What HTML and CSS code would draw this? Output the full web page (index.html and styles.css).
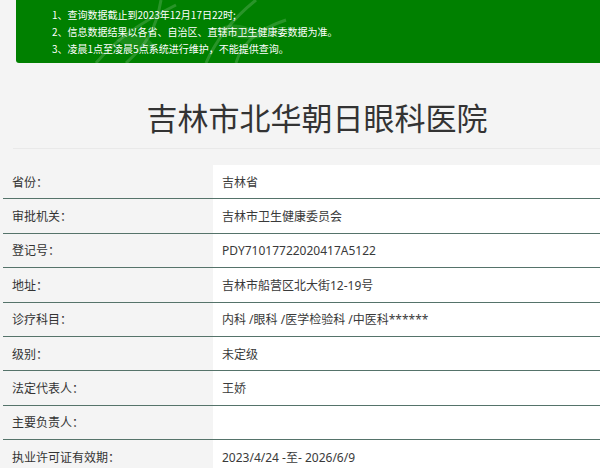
FILE: index.html
```html
<!DOCTYPE html>
<html lang="zh-CN">
<head>
<meta charset="utf-8">
<title>吉林市北华朝日眼科医院</title>
<link rel="stylesheet" href="styles.css">
</head>
<body>
<div class="notice">
  <svg class="watermark" width="260" height="63" viewBox="0 0 260 63" aria-hidden="true">
    <path d="M40 63 C60 40 80 25 120 5" />
    <path d="M70 63 C90 45 100 30 105 0" />
    <path d="M150 63 C160 40 175 20 200 0" />
    <path d="M180 63 C185 45 200 30 230 20" />
    <path class="leaf" d="M60 40 C75 30 92 34 100 48 C85 50 70 48 60 40 Z" />
    <path class="leaf" d="M160 30 C175 20 195 24 205 38 C188 40 172 38 160 30 Z" />
  </svg>
  <p class="notice-line">1、查询数据截止到2023年12月17日22时;</p>
  <p class="notice-line">2、信息数据结果以各省、自治区、直辖市卫生健康委数据为准。</p>
  <p class="notice-line">3、凌晨1点至凌晨5点系统进行维护，不能提供查询。</p>
</div>
<div class="title-wrap">
  <h1 class="title">吉林市北华朝日眼科医院</h1>
</div>
<div class="info">
  <div class="row"><div class="label">省份：</div><div class="value">吉林省</div></div>
  <div class="row"><div class="label">审批机关：</div><div class="value">吉林市卫生健康委员会</div></div>
  <div class="row"><div class="label">登记号：</div><div class="value">PDY71017722020417A5122</div></div>
  <div class="row"><div class="label">地址：</div><div class="value">吉林市船营区北大街12-19号</div></div>
  <div class="row"><div class="label">诊疗科目：</div><div class="value">内科 /眼科 /医学检验科 /中医科******</div></div>
  <div class="row"><div class="label">级别：</div><div class="value">未定级</div></div>
  <div class="row"><div class="label">法定代表人：</div><div class="value">王娇</div></div>
  <div class="row"><div class="label">主要负责人：</div><div class="value"></div></div>
  <div class="row"><div class="label">执业许可证有效期：</div><div class="value">2023/4/24 -至- 2026/6/9</div></div>
</div>
</body>
</html>
```

FILE: styles.css
```css
html, body {
  margin: 0;
  padding: 0;
}
body {
  background: #f4f4f4;
  font-family: "Noto Sans", "Noto Sans CJK SC", sans-serif;
  color: #333;
  width: 600px;
  overflow: hidden;
}
.notice {
  position: relative;
  margin-left: 16px;
  background: #008000;
  border-bottom-left-radius: 3px;
  padding: 6px 0 6px 36px;
  height: 51px;
  overflow: hidden;
}
.watermark {
  position: absolute;
  left: 40px;
  top: 0;
}
.watermark path {
  fill: none;
  stroke: rgba(255, 255, 255, 0.16);
  stroke-width: 3;
}
.watermark .leaf {
  fill: rgba(255, 255, 255, 0.1);
  stroke: none;
}
.notice-line {
  position: relative;
  margin: 0;
  color: #fff;
  font-size: 10px;
  line-height: 17px;
  white-space: nowrap;
  font-family: "Noto Sans CJK SC", sans-serif;
}
.title-wrap {
  margin-left: 13px;
  padding: 34px 0 11px 21px;
  border-bottom: 1px solid #e9e9e9;
}
.title {
  margin: 0;
  text-align: center;
  font-size: 31px;
  font-weight: normal;
  line-height: 40px;
  color: #333;
  font-family: "Noto Sans CJK SC", sans-serif;
}
.info {
  margin: 16px 0 0 3px;
}
.row {
  display: grid;
  grid-template-columns: 210px 1fr;
  height: 34.4px;
  box-sizing: border-box;
  border-bottom: 1px solid #55736a;
  font-size: 12px;
}
.label {
  display: flex;
  align-items: center;
  padding-left: 9px;
  color: #333;
  background: #f4f4f4;
}
.value {
  display: flex;
  align-items: center;
  padding-left: 9px;
  color: #3a3a3a;
  background: #fff;
}
```
